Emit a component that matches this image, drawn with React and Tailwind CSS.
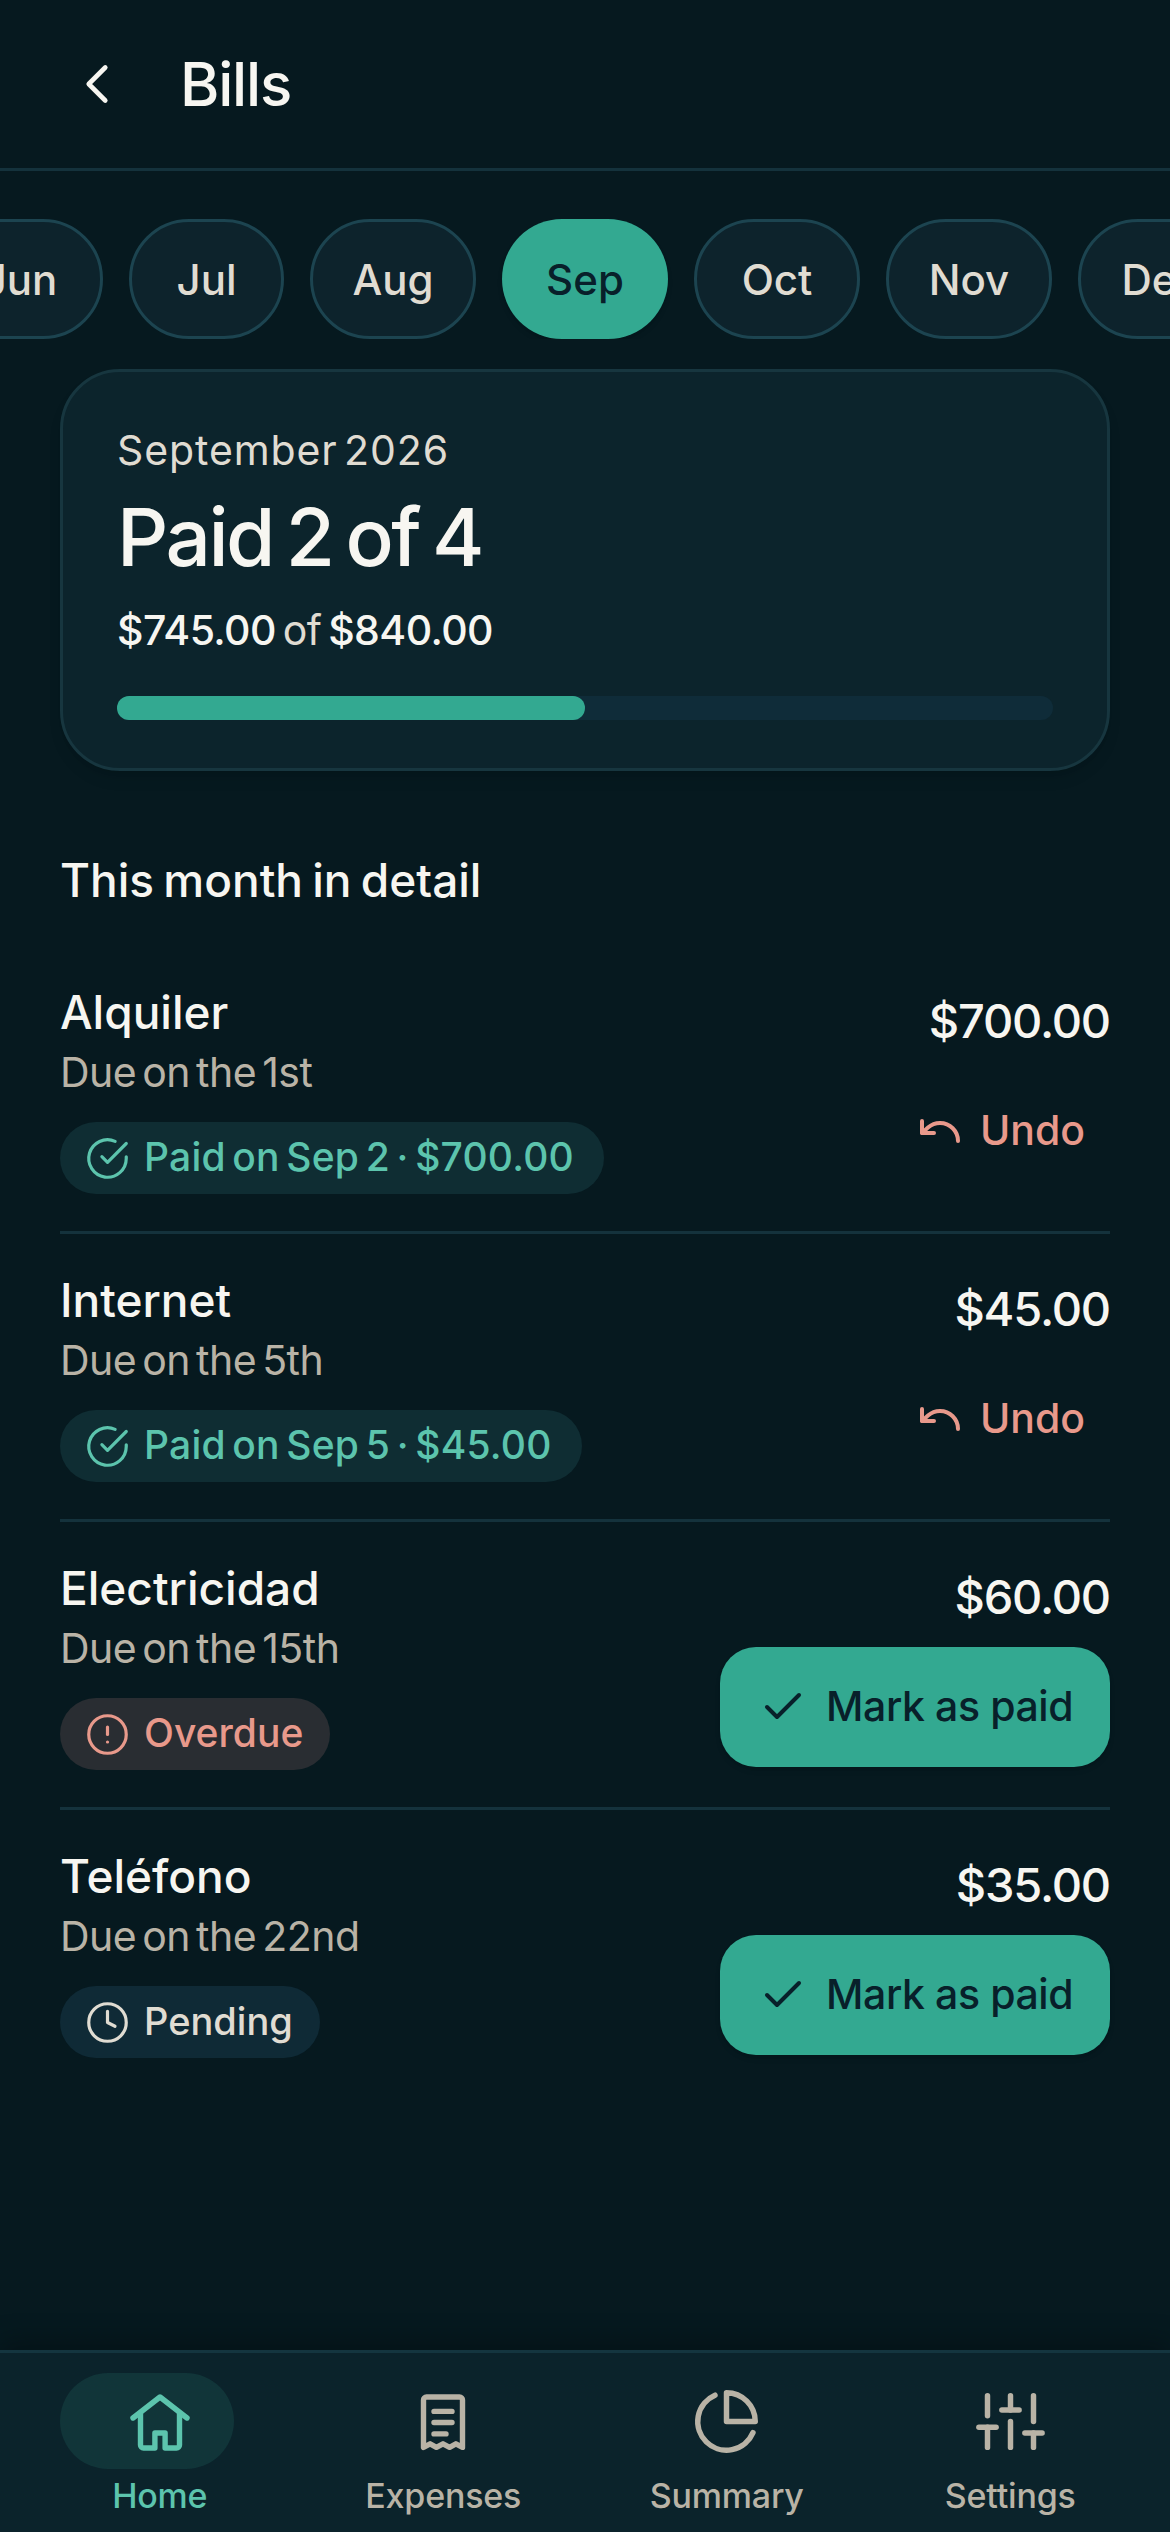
import React from 'react';
import { Undo } from 'lucide-react';
import { FiAlertCircle, FiCheck, FiCheckCircle, FiChevronLeft, FiClock, FiPieChart, FiSliders } from 'react-icons/fi';

const months = [
  { label: 'Jun', width: 'w-[166px]' },
  { label: 'Jul', width: 'w-[155px]' },
  { label: 'Aug', width: 'w-[166px]' },
  { label: 'Sep', width: 'w-[166px]', active: true },
  { label: 'Oct', width: 'w-[166px]' },
  { label: 'Nov', width: 'w-[166px]' },
  { label: 'Dec', width: 'w-[166px]' },
];

const bills = [
  { name: 'Alquiler', due: 'Due on the 1st', amount: '$700.00', status: 'paid', note: 'Paid on Sep 2 · $700.00' },
  { name: 'Internet', due: 'Due on the 5th', amount: '$45.00', status: 'paid', note: 'Paid on Sep 5 · $45.00' },
  { name: 'Electricidad', due: 'Due on the 15th', amount: '$60.00', status: 'overdue', note: 'Overdue' },
  { name: 'Teléfono', due: 'Due on the 22nd', amount: '$35.00', status: 'pending', note: 'Pending' },
];

function HomeIcon() {
  return (
    <svg width="72" height="72" viewBox="0 0 24 24" fill="none" stroke="currentColor" strokeWidth="1.8" strokeLinecap="round" strokeLinejoin="round">
      <path d="M3 11 12 4l9 7" />
      <path d="M5.5 9.5V20a1 1 0 0 0 1 1h3.8v-5h3.4v5h3.8a1 1 0 0 0 1-1V9.5" />
    </svg>
  );
}

function ReceiptIcon() {
  return (
    <svg width="72" height="72" viewBox="0 0 24 24" fill="none" stroke="currentColor" strokeWidth="1.8" strokeLinecap="round" strokeLinejoin="round">
      <path d="M5.5 20.8V5a1 1 0 0 1 1-1h11a1 1 0 0 1 1 1v15.8l-2.2-1.2-2.1 1.2-2.2-1.2-2.2 1.2-2.1-1.2z" />
      <path d="M9 8.8h6M9 12.5h6M9 16.3h4" />
    </svg>
  );
}

function Badge({ status, note }) {
  if (status === 'paid') {
    return (
      <div className="flex items-center gap-[14px] h-[72px] w-fit rounded-full bg-[#0f2d33] pl-[25px] pr-[30px] text-[#5cc4ad]">
        <FiCheckCircle size={45} strokeWidth={1.7} />
        <span className="text-[39px] leading-[66px] pb-[3px] tracking-[0.2px] [word-spacing:-4px] font-medium">{note}</span>
      </div>
    );
  }
  if (status === 'overdue') {
    return (
      <div className="flex items-center gap-[14px] h-[72px] w-fit rounded-full bg-[#292d32] pl-[25px] pr-[27px] text-[#e8998b]">
        <FiAlertCircle size={45} strokeWidth={1.7} />
        <span className="text-[39px] leading-[66px] pb-[3px] font-medium">{note}</span>
      </div>
    );
  }
  return (
    <div className="flex items-center gap-[14px] h-[72px] w-fit rounded-full bg-[#0f2a36] pl-[25px] pr-[27px] text-[#e0dcd2]">
      <FiClock size={45} strokeWidth={1.7} />
      <span className="text-[38px] leading-[66px] pb-[3px] font-medium">{note}</span>
    </div>
  );
}

function BillRow({ bill, last }) {
  return (
    <div className={`flex items-center justify-between pt-[36px] ${last ? 'pb-[40px]' : 'pb-[37px] border-b-[3px] border-[#14323c]'}`}>
      <div>
        <div className="text-[46px] leading-[60px] font-medium text-[#f7f6f1]">{bill.name}</div>
        <div className="mt-[3px] text-[41px] leading-[54px] text-[#b9b3a6] tracking-[-0.5px] [word-spacing:-5px]">{bill.due}</div>
        <div className="mt-[23px]">
          <Badge status={bill.status} note={bill.note} />
        </div>
      </div>
      <div className="flex flex-col items-end gap-[20px] pt-[6px]">
        <div className="text-[47px] leading-[60px] font-medium text-[#f7f6f1] tracking-[-1.2px]">{bill.amount}</div>
        {bill.status === 'paid' ? (
          <button className="flex items-center gap-[16px] h-[120px] pr-[25px] text-[#e8998b]">
            <Undo size={48} strokeWidth={2} />
            <span className="text-[41px] font-medium">Undo</span>
          </button>
        ) : (
          <button className="flex items-center gap-[19px] h-[120px] w-[390px] rounded-[36px] bg-[#33a991] pl-[39px] text-[#08202a] shadow-md">
            <FiCheck size={48} strokeWidth={2} />
            <span className="text-[41px] font-medium tracking-[-0.4px]">Mark as paid</span>
          </button>
        )}
      </div>
    </div>
  );
}

function NavItem({ label, active, children }) {
  return (
    <div className={`relative flex flex-col items-center ${active ? 'text-[#5cc4ad]' : 'text-[#b9b3a6]'}`}>
      {active && <div className="absolute left-[42px] top-0 w-[174px] h-[96px] rounded-full bg-[#113539]" />}
      <div className="relative flex items-center justify-center h-[96px]">{children}</div>
      <span className="mt-[5px] text-[34px] leading-[44px] font-medium tracking-[-0.2px]">{label}</span>
    </div>
  );
}

export default function App() {
  return (
    <div className="relative flex flex-col h-[2532px] overflow-hidden bg-[#06191f] font-['Inter',sans-serif]">
      <header className="flex items-center h-[171px] shrink-0 border-b-[3px] border-[#14323c] pl-[64px]">
        <FiChevronLeft size={66} strokeWidth={1.7} className="text-[#f7f6f1]" />
        <h1 className="ml-[50px] text-[60px] font-medium text-[#f7f6f1] tracking-[-1.2px]">Bills</h1>
      </header>

      <div className="mt-[48px] shrink-0 overflow-hidden">
        <div className="flex gap-[26px] -ml-[63px] w-max">
          {months.map((m) => (
            <div
              key={m.label}
              className={`flex items-center justify-center h-[120px] rounded-full text-[42px] font-medium ${m.width} ${
                m.active ? 'bg-[#33a991] text-[#08202a] shadow-md' : 'bg-[#0d232c] border-[3px] border-[#1c4450] text-[#e0dcd2]'
              }`}
            >
              {m.label}
            </div>
          ))}
        </div>
      </div>

      <main className="flex-1 px-[60px]">
        <section className="mt-[30px] rounded-[60px] border-[3px] border-[#17363f] bg-[#0c242c] px-[54px] pt-[51px] pb-[48px] shadow-lg">
          <div className="text-[41px] leading-[54px] text-[#e0dcd2] tracking-[0.9px] [word-spacing:-6px]">September 2026</div>
          <div className="mt-[9px] text-[80px] leading-[102px] font-medium text-[#f7f6f1] tracking-[-2.5px] [word-spacing:-6px]">Paid 2 of 4</div>
          <div className="mt-[15px] text-[41px] leading-[54px] text-[#e0dcd2] tracking-[-0.6px] [word-spacing:-4px]">
            <span className="font-medium text-[#f7f6f1]">$745.00</span> of <span className="font-medium text-[#f7f6f1]">$840.00</span>
          </div>
          <div className="mt-[39px] h-[24px] rounded-full bg-[#0f2c39]">
            <div className="h-full w-1/2 rounded-full bg-[#33a991]" />
          </div>
        </section>

        <h2 className="mt-[79px] text-[46px] leading-[60px] font-medium text-[#f7f6f1] [word-spacing:-3px]">This month in detail</h2>

        <div className="mt-[36px]">
          {bills.map((b, i) => (
            <BillRow key={b.name} bill={b} last={i === bills.length - 1} />
          ))}
        </div>
      </main>

      <nav className="grid grid-cols-4 h-[182px] shrink-0 border-t-[3px] border-[#14353f] bg-[#0b232b] px-[18px] pt-[20px] shadow-[0_-10px_24px_rgba(0,0,0,0.25)]">
        <NavItem label="Home" active>
          <HomeIcon />
        </NavItem>
        <NavItem label="Expenses">
          <ReceiptIcon />
        </NavItem>
        <NavItem label="Summary">
          <FiPieChart size={69} strokeWidth={1.9} />
        </NavItem>
        <NavItem label="Settings">
          <FiSliders size={69} strokeWidth={1.9} />
        </NavItem>
      </nav>
    </div>
  );
}
